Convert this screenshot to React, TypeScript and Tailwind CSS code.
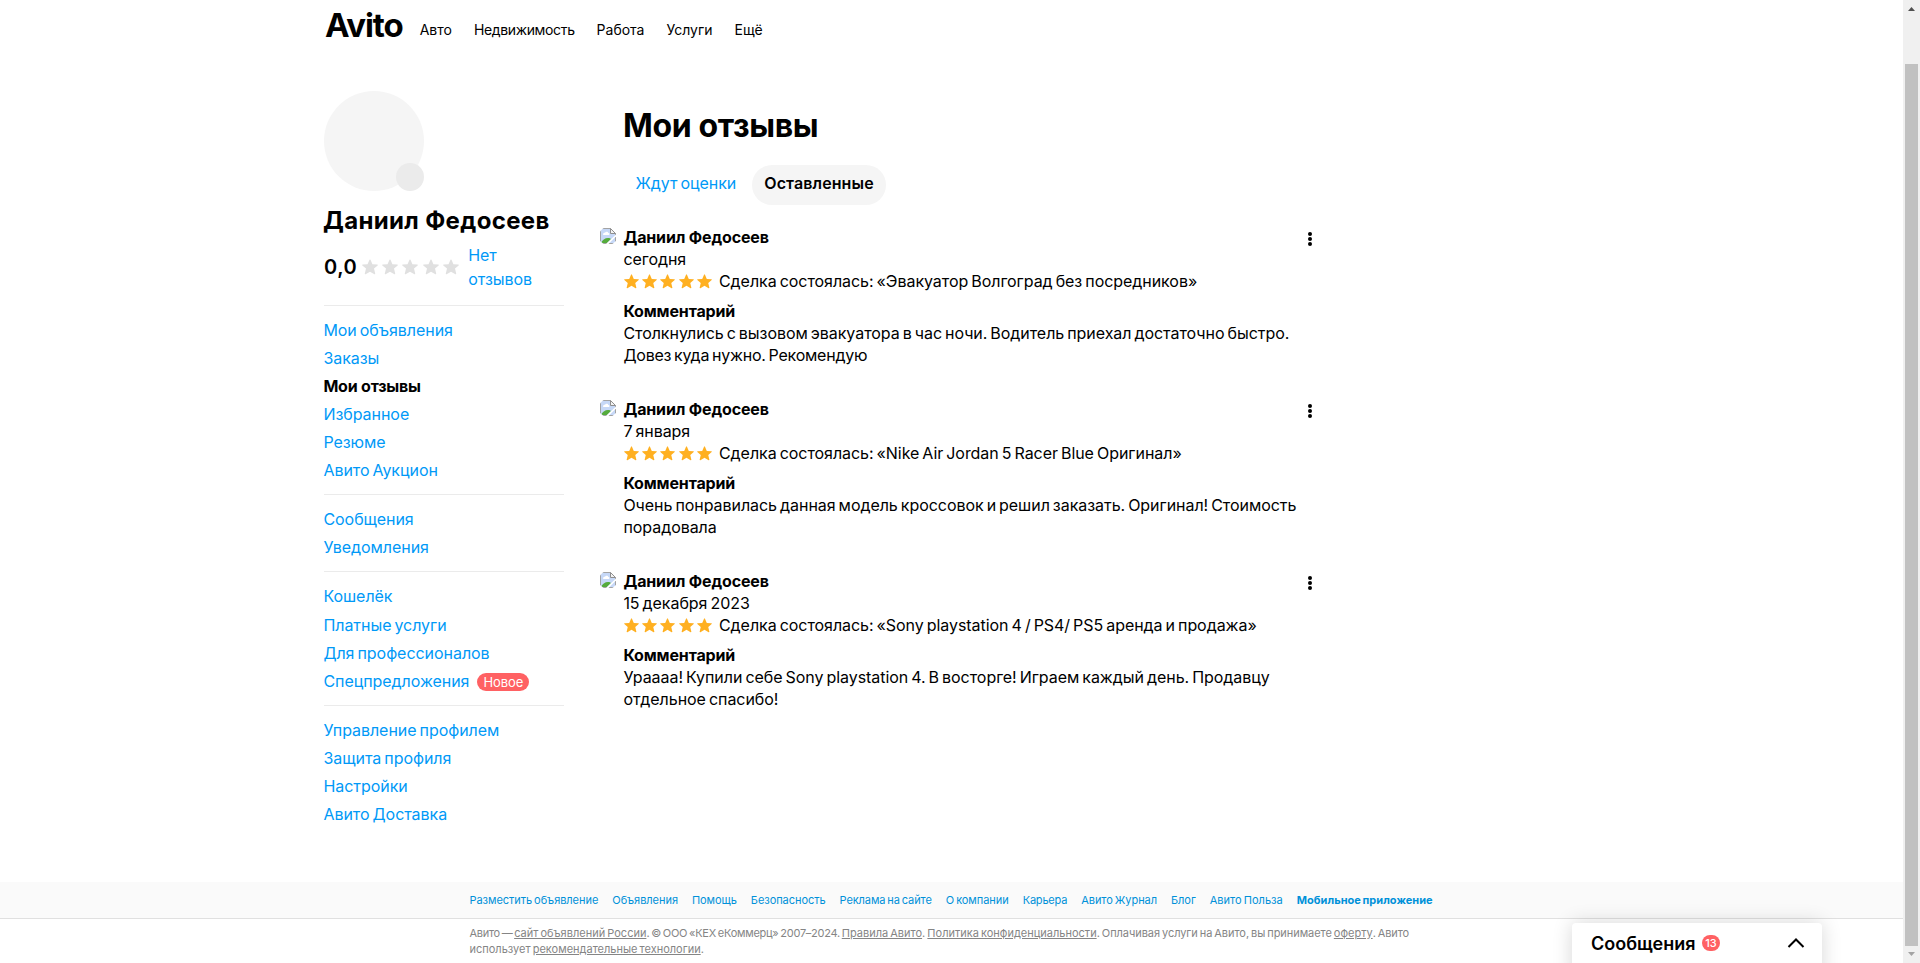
import clsx from "clsx";

interface NavLink {
  label: string;
  className?: string;
  active?: boolean;
  badge?: string;
}

interface Review {
  id: number;
  author: string;
  date: string;
  deal: string;
  comment: { text: string; className?: string }[];
}

const categories: NavLink[] = [
  { label: "Авто" },
  { label: "Недвижимость", className: "tracking-[-0.35px]" },
  { label: "Работа" },
  { label: "Услуги" },
  { label: "Ещё" },
];

const menuGroups: NavLink[][] = [
  [
    { label: "Мои объявления" },
    { label: "Заказы" },
    { label: "Мои отзывы", active: true },
    { label: "Избранное" },
    { label: "Резюме" },
    { label: "Авито Аукцион" },
  ],
  [{ label: "Сообщения" }, { label: "Уведомления" }],
  [
    { label: "Кошелёк", className: "mb-px" },
    { label: "Платные услуги" },
    { label: "Для профессионалов" },
    { label: "Спецпредложения", badge: "Новое" },
  ],
  [
    { label: "Управление профилем" },
    { label: "Защита профиля" },
    { label: "Настройки" },
    { label: "Авито Доставка" },
  ],
];

const reviews: Review[] = [
  {
    id: 1,
    author: "Даниил Федосеев",
    date: "сегодня",
    deal: "Сделка состоялась: «Эвакуатор Волгоград без посредников»",
    comment: [
      { text: "Столкнулись с вызовом эвакуатора в час ночи. Водитель приехал достаточно быстро." },
      { text: "Довез куда нужно. Рекомендую", className: "tracking-[-0.23px]" },
    ],
  },
  {
    id: 2,
    author: "Даниил Федосеев",
    date: "7 января",
    deal: "Сделка состоялась: «Nike Air Jordan 5 Racer Blue Оригинал»",
    comment: [
      { text: "Очень понравилась данная модель кроссовок и решил заказать. Оригинал! Стоимость" },
      { text: "порадовала" },
    ],
  },
  {
    id: 3,
    author: "Даниил Федосеев",
    date: "15 декабря 2023",
    deal: "Сделка состоялась: «Sony playstation 4 / PS4/ PS5 аренда и продажа»",
    comment: [
      { text: "Ураааа! Купили себе Sony playstation 4. В восторге! Играем каждый день. Продавцу" },
      { text: "отдельное спасибо!" },
    ],
  },
];

const footerLinks: NavLink[] = [
  { label: "Разместить объявление" },
  { label: "Объявления" },
  { label: "Помощь" },
  { label: "Безопасность", className: "tracking-[-0.05px]" },
  { label: "Реклама на сайте", className: "tracking-[-0.1px]" },
  { label: "О компании" },
  { label: "Карьера", className: "tracking-[-0.2px]" },
  { label: "Авито Журнал" },
  { label: "Блог" },
  { label: "Авито Польза", className: "tracking-[0.03px]" },
  { label: "Мобильное приложение", className: "font-bold tracking-[0.03px]" },
];

function Stars({ size, className }: { size: number; className: string }) {
  return (
    <div className={clsx("flex", className)}>
      {[1, 2, 3, 4, 5].map((n) => (
        <svg key={n} width={size} height={size} viewBox="0 0 16 16" fill="currentColor">
          <path d="M7.5.7a.55.55 0 0 1 1 0l1.95 4.5 4.9.35c.5.03.7.62.3.95l-3.65 3.1 1.2 4.95c.1.5-.4.85-.8.6L8 12.65l-4.4 2.5c-.4.25-.9-.1-.8-.6l1.2-4.95L.35 6.5c-.4-.33-.2-.92.3-.95l4.9-.35z" />
        </svg>
      ))}
    </div>
  );
}

function BrokenImage() {
  return (
    <svg className="mt-0.5 h-4 w-4 shrink-0" viewBox="0 0 16 16">
      <clipPath id="round">
        <circle cx="8" cy="8" r="9" />
      </clipPath>
      <g clipPath="url(#round)">
        <path d="M.5.5h10l5 5v10H.5z" fill="#c6d8f7" stroke="#a3a3a3" />
        <path d="M3 6.5c0-1.4 1.2-2 2-1.8.6-1.3 3-1.2 3.4.4 1.1 0 1.6 1.5.6 2H3.6z" fill="#fff" />
        <path d="M1 15c1-3 4-5 7-5 1.500 0 2.500.5 3 1l-4 4z" fill="#55ab3c" />
        <path d="M16 6.500v2L8.500 16H6z" fill="#fff" />
        <path d="M10.500.5v5h5z" fill="#f2f2f2" stroke="#8f8f8f" />
      </g>
    </svg>
  );
}

function Header() {
  return (
    <header className="flex h-[91px] items-start pl-[325px]">
      <a className="text-[33px] leading-[50px] font-bold tracking-[-1.1px]">Avito</a>
      <nav className="mt-5 ml-[17px] flex gap-[22px] text-sm tracking-normal">
        {categories.map((c) => (
          <a key={c.label} className={c.className}>
            {c.label}
          </a>
        ))}
      </nav>
    </header>
  );
}

function Sidebar() {
  return (
    <aside className="w-60 shrink-0">
      <div className="relative h-[100px] w-[100px] rounded-full bg-[#f5f5f5]">
        <span className="absolute right-0 bottom-0 h-7 w-7 rounded-full bg-[#ebebeb]" />
      </div>
      <h3 className="mt-[15px] -ml-px text-2xl leading-[30px] font-bold tracking-[0.35px] whitespace-nowrap [word-spacing:0px]">
        Даниил Федосеев
      </h3>
      <div className="mt-[7px] flex h-12 items-center">
        <span className="w-[38px] text-xl leading-6 font-semibold tracking-[0.5px]">0,0</span>
        <Stars size={16} className="gap-[4.2px] text-[#e0e0e0]" />
        <a className="ml-[9.5px] w-20 leading-6 text-[#0099f7]">Нет отзывов</a>
      </div>
      <div className="mt-[14px]">
        {menuGroups.map((group, i) => (
          <ul key={i} className="border-t border-[#ebebeb] py-[10px]">
            {group.map((item) => (
              <li
                key={item.label}
                className={clsx("-ml-[0.6px] flex h-7 items-center leading-7", item.className)}
              >
                <a
                  className={
                    item.active
                      ? "font-bold tracking-[-0.2px] [word-spacing:0px]"
                      : "text-[#0099f7]"
                  }
                >
                  {item.label}
                </a>
                {item.badge && (
                  <span className="mt-0.5 ml-2 h-[18px] w-[52px] rounded-full bg-[#ff6163] text-center text-[13px] leading-[18px] text-white">
                    {item.badge}
                  </span>
                )}
              </li>
            ))}
          </ul>
        ))}
      </div>
    </aside>
  );
}

function ReviewItem({ review }: { review: Review }) {
  return (
    <article className="flex h-[172px] leading-[22px]">
      <BrokenImage />
      <div className="ml-[7.4px] w-[680.6px] whitespace-nowrap">
        <p className="font-bold tracking-[-0.15px] [word-spacing:0px]">{review.author}</p>
        <p>{review.date}</p>
        <div className="ml-[0.6px] flex items-center">
          <Stars size={15} className="w-[95px] gap-[3.25px] text-[#ffb021]" />
          <span>{review.deal}</span>
        </div>
        <p className="mt-2 font-bold tracking-[-0.15px]">Комментарий</p>
        {review.comment.map((line) => (
          <p key={line.text} className={line.className}>
            {line.text}
          </p>
        ))}
      </div>
      <svg className="mt-1 h-[18px] w-4" viewBox="0 0 16 18">
        <circle cx="6" cy="4" r="2" />
        <circle cx="6" cy="9" r="2" />
        <circle cx="6" cy="14" r="2" />
      </svg>
    </article>
  );
}

function Footer() {
  return (
    <footer className="h-[81px] shrink-0 text-[11px] [word-spacing:-1px]">
      <div className="flex h-[37px] gap-[14px] border-b border-[#e0e0e0] bg-[#fafafa] pl-[469.5px] leading-9 whitespace-nowrap text-[#0091d9]">
        {footerLinks.map((l) => (
          <a key={l.label} className={l.className}>
            {l.label}
          </a>
        ))}
      </div>
      <div className="mt-[6px] pl-[469.5px] leading-4 tracking-normal whitespace-nowrap text-[#858585]">
        <p>
          <span className="tracking-[-0.3px]">Авито — </span>
          <u>сайт объявлений России</u>
          <span className="tracking-[-0.26px]">. © ООО «КЕХ еКоммерц» 2007–2024. </span>
          <u>Правила Авито</u>. <u>Политика конфиденциальности</u>
          <span className="tracking-[-0.06px]">. Оплачивая услуги на Авито, вы принимаете </span>
          <u>оферту</u>
          <span className="tracking-[-0.1px]">. Авито</span>
        </p>
        <p>
          использует <u>рекомендательные технологии</u>.
        </p>
      </div>
    </footer>
  );
}

function Messenger() {
  return (
    <div className="absolute top-[923px] left-[1572px] flex h-[60px] w-[250px] rounded bg-white pt-3 pl-5 shadow-[0_0_20px_rgba(0,0,0,0.16)]">
      <span className="-mt-[3px] -ml-px w-[111px] text-lg leading-[23px] font-semibold tracking-normal whitespace-nowrap">
        Сообщения
      </span>
      <span className="h-4 w-[18px] rounded-full bg-[#ff6163] text-center text-[11px] leading-4 font-medium text-white">
        13
      </span>
      <svg
        className="mt-0.5 ml-[67px] h-3 w-[18px]"
        viewBox="0 0 18 12"
        fill="none"
        stroke="#000"
        strokeWidth="2"
      >
        <path d="M1.500 10 9 2.500l7.500 7.500" />
      </svg>
    </div>
  );
}

function Scrollbar() {
  return (
    <div className="flex w-[17px] shrink-0 flex-col items-center bg-[#f0f0f0]">
      <svg className="h-16 w-[17px] shrink-0" viewBox="0 0 17 64">
        <path d="M8.500 7 12 11H5z" fill="#505050" />
      </svg>
      <div className="h-[882px] w-[13px] bg-[#c1c1c1]" />
      <svg className="h-[17px] w-[17px]" viewBox="0 0 17 17">
        <path d="M8.500 10 5 6h7z" fill="#a3a3a3" />
      </svg>
    </div>
  );
}

export default function App() {
  return (
    <div className="relative flex h-[963px] w-[1920px] overflow-hidden bg-white font-[Inter,'Liberation_Sans',sans-serif] text-base tracking-[-0.05px] text-black [word-spacing:-1.4px]">
      <div className="flex w-[1903px] flex-col">
        <Header />
        <div className="flex flex-1 pl-[324px]">
          <Sidebar />
          <main className="ml-9">
            <h1 className="mt-[15px] ml-[23px] text-[32px] leading-10 font-bold tracking-[-0.35px] [word-spacing:0px]">
              Мои отзывы
            </h1>
            <div className="mt-[19px] ml-6 flex leading-[37px]">
              <a className="w-[128px] pl-[11.5px] whitespace-nowrap text-[#0099f7]">Ждут оценки</a>
              <a className="h-10 w-[134px] rounded-[20px] bg-[#f5f5f5] text-center font-semibold tracking-[0.1px]">
                Оставленные
              </a>
            </div>
            <div className="mt-[21px]">
              {reviews.map((r) => (
                <ReviewItem key={r.id} review={r} />
              ))}
            </div>
          </main>
        </div>
        <Footer />
      </div>
      <Scrollbar />
      <Messenger />
    </div>
  );
}
